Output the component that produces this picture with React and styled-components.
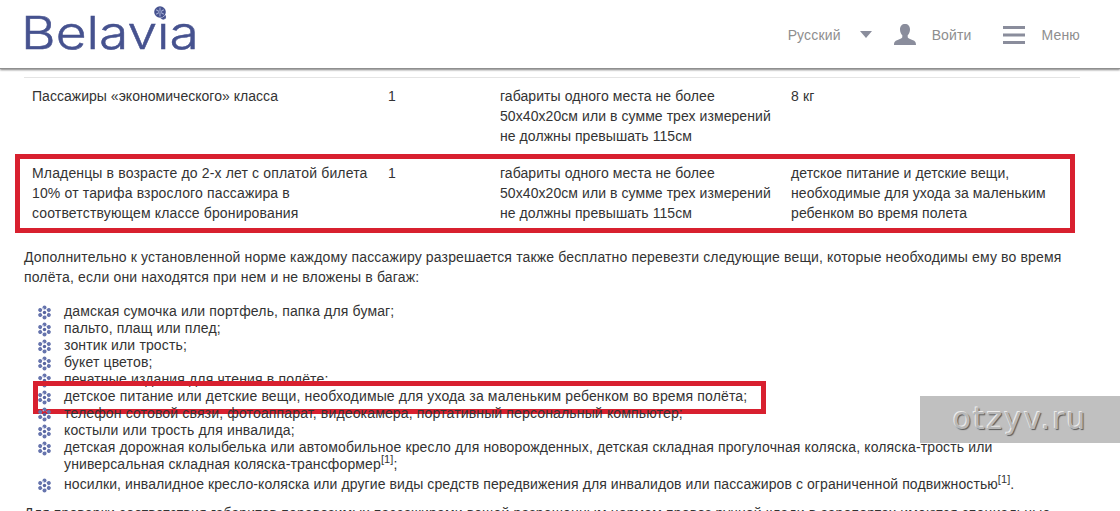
import React from 'react';
import styled, { createGlobalStyle } from 'styled-components';

const GlobalStyle = createGlobalStyle`
    html, body {
        margin: 0;
        padding: 0;
        height: 511px;
        overflow: hidden;
        background: #fff;
    }
    body {
        font-family: "Liberation Sans", Arial, sans-serif;
        font-size: 14px;
        letter-spacing: 0.15px;
        color: #333;
    }
`;

const Page = styled.div`
    position: relative;
    width: 1120px;
    height: 511px;
    overflow: hidden;
`;

const Header = styled.header`
    display: flex;
    align-items: center;
    justify-content: space-between;
    height: 69px;
    padding: 0 40px 0 24px;
    box-sizing: border-box;
    background: #fff;
    border-bottom: 1px solid #8f8f8f;
    box-shadow: 0 1px 2px #808080;
`;

const Logo = styled.div`
    position: relative;
    width: 171px;
    height: 45px;
    margin-top: -3px;
`;

const LogoText = styled.span`
    display: block;
    font-family: Inter, sans-serif;
    font-size: 45px;
    font-weight: 300;
    line-height: 45px;
    letter-spacing: 0;
    color: #46528f;
    -webkit-text-stroke: 0.5px #46528f;
    transform: translateX(-3px) scaleX(1.185);
    transform-origin: left center;
`;

const LogoDot = styled.span`
    position: absolute;
    top: -4px;
    left: 130px;
    display: flex;
    background: #fff;
    border-radius: 50%;
`;

const Nav = styled.nav`
    display: flex;
    align-items: center;
    margin-top: 1px;
`;

const NavLabel = styled.span`
    font-size: 14px;
    color: #8e8e8e;
    margin-left: ${ props => props.$gap || 0 }px;
`;

const NavIcon = styled.svg`
    display: block;
    fill: #8a8d9c;
    margin-left: ${ props => props.$gap }px;
`;

const Content = styled.main`
    padding: 8px 40px 0 24px;
`;

const Table = styled.div`
    border-top: 1px solid #e4e4e4;
`;

const Row = styled.div`
    position: relative;
    display: grid;
    grid-template-columns: 356px 112px 291px 1fr;
    padding: 8px 8px 9px;
    line-height: 20px;
`;

const Cell = styled.div`
    letter-spacing: ${ props => props.$spacing ?? 0.15 }px;
`;

const RowMark = styled.div`
    position: absolute;
    top: -1px;
    left: -9px;
    width: 1060px;
    height: 79px;
    box-sizing: border-box;
    border: 5px solid #d8202f;
`;

const Paragraph = styled.p`
    margin: ${ props => props.$top ?? 15 }px 0 0;
    line-height: 20px;
`;

const List = styled.ul`
    list-style: none;
    margin: 16px 0 0;
    padding: 0 0 0 13px;
`;

const Item = styled.li`
    position: relative;
    display: flex;
    line-height: 17px;
    gap: 12px;
    margin-top: ${ props => props.$pushed ? '3px' : 0 };
    letter-spacing: ${ props => props.$spacing ?? 0.15 }px;
`;

const Bullet = styled.svg`
    flex: none;
    width: 15px;
    height: 15px;
    margin-top: 2px;
`;

const ItemMark = styled.div`
    position: absolute;
    top: -7px;
    left: -4px;
    width: 733px;
    height: 33px;
    box-sizing: border-box;
    border: 5px solid #d8202f;
`;

const Note = styled.sup`
    font-size: 11px;
    line-height: 0;
    vertical-align: baseline;
    position: relative;
    top: -6px;
`;

const Watermark = styled.div`
    position: absolute;
    right: 0;
    top: 396px;
    display: flex;
    align-items: center;
    justify-content: center;
    width: 200px;
    height: 47px;
    padding-bottom: 3px;
    box-sizing: border-box;
    background: #c0c0c0;
    font-family: "DejaVu Sans", sans-serif;
    font-size: 30px;
    letter-spacing: 1.8px;
    color: #b8b8b8;
    text-shadow: -1px -1px 0 #ececec, 1px 1px 1px #5c5c5c;
`;

function Flake( { size = 15 } ) {
    const petals = [ 0, 60, 120, 180, 240, 300 ];
    return (
        <svg width={ size } height={ size } viewBox="0 0 30 30" style={ { display: 'block' } }>
            <circle cx="15" cy="15" r="14.500" fill="#46528f" />
            { petals.map( angle => (
                <line key={ angle } x1="15" y1="13" x2="15" y2="4" stroke="#aab3d8" strokeWidth="2.500" transform={ `rotate(${ angle } 15 15)` } />
            ) ) }
        </svg>
    );
}

function BulletFlake() {
    const petals = [ 0, 60, 120, 180, 240, 300 ];
    return (
        <Bullet viewBox="0 0 30 30">
            { petals.map( angle => (
                <g key={ angle } transform={ `rotate(${ angle } 15 15)` }>
                    <circle cx="15" cy="5" r="4" fill="#6674ad" />
                    <circle cx="20.5" cy="9" r="1.6" fill="#b4bcdc" />
                </g>
            ) ) }
            <circle cx="15" cy="15" r="3.4" fill="#56639f" />
        </Bullet>
    );
}

const ITEMS = [
    'дамская сумочка или портфель, папка для бумаг;',
    'пальто, плащ или плед;',
    'зонтик или трость;',
    'букет цветов;',
    'печатные издания для чтения в полёте;',
    'детское питание или детские вещи, необходимые для ухода за маленьким ребенком во время полёта;',
    'телефон сотовой связи, фотоаппарат, видеокамера, портативный персональный компьютер;',
    'костыли или трость для инвалида;',
];

/**
 * Baggage page of the airline site
 *
 * @returns {object} React component render
 */
export default function App() {
    return (
        <Page>
            <GlobalStyle />
            <Header>
                <Logo>
                    <LogoText>Belavia</LogoText>
                    <LogoDot><Flake size={ 12 } /></LogoDot>
                </Logo>
                <Nav>
                    <NavLabel>Русский</NavLabel>
                    <NavIcon $gap={ 19 } width="12" height="7" viewBox="0 0 12 7">
                        <path d="M0 0h12L6 7z" />
                    </NavIcon>
                    <NavIcon $gap={ 22 } width="22" height="21" viewBox="0 0 22 21">
                        <path d="M11 0c3 0 5 2 5 5.500 0 2.500-1 4.500-2.300 5.800v1.900c0 1 3 1.800 5.300 3 1.700.8 3 1.500 3 4.800H0c0-3.300 1.300-4 3-4.800 2.300-1.200 5.300-2 5.300-3v-1.900C7 10 6 8 6 5.500 6 2 8 0 11 0z" />
                    </NavIcon>
                    <NavLabel $gap={ 16 }>Войти</NavLabel>
                    <NavIcon $gap={ 31 } width="22" height="18" viewBox="0 0 22 18">
                        <path d="M0 0h22v3H0zM0 7.500h22v3H0zM0 15h22v3H0z" />
                    </NavIcon>
                    <NavLabel $gap={ 17 }>Меню</NavLabel>
                </Nav>
            </Header>
            <Content>
                <Table>
                    <Row>
                        <Cell $spacing={ 0.03 }>Пассажиры «экономического» класса</Cell>
                        <Cell>1</Cell>
                        <Cell $spacing={ 0.07 }>габариты одного места не более<br />50х40х20см или в сумме трех измерений<br />не должны превышать 115см</Cell>
                        <Cell>8 кг</Cell>
                    </Row>
                    <Row>
                        <Cell>Младенцы в возрасте до 2-х лет с оплатой билета<br />10% от тарифа взрослого пассажира в<br />соответствующем классе бронирования</Cell>
                        <Cell>1</Cell>
                        <Cell $spacing={ 0.07 }>габариты одного места не более<br />50х40х20см или в сумме трех измерений<br />не должны превышать 115см</Cell>
                        <Cell $spacing={ 0.09 }>детское питание и детские вещи,<br />необходимые для ухода за маленьким<br />ребенком во время полета</Cell>
                        <RowMark />
                    </Row>
                </Table>
                <Paragraph>
                    Дополнительно к установленной норме каждому пассажиру разрешается также бесплатно перевезти следующие вещи, которые необходимы ему во время полёта, если они находятся при нем и не вложены в багаж:
                </Paragraph>
                <List>
                    { ITEMS.map( ( text, index ) => (
                        <Item key={ text }>
                            <BulletFlake />
                            <span>{ text }</span>
                            { index === 5 && <ItemMark /> }
                        </Item>
                    ) ) }
                    <Item $spacing={ 0.13 }>
                        <BulletFlake />
                        <span>детская дорожная колыбелька или автомобильное кресло для новорожденных, детская складная прогулочная коляска, коляска-трость или универсальная складная коляска-трансформер<Note>[1]</Note>;</span>
                    </Item>
                    <Item $pushed $spacing={ 0.09 }>
                        <BulletFlake />
                        <span>носилки, инвалидное кресло-коляска или другие виды средств передвижения для инвалидов или пассажиров с ограниченной подвижностью<Note>[1]</Note>.</span>
                    </Item>
                </List>
                <Paragraph $top={ 10 }>
                    Для проверки соответствия габаритов перевозимых пассажирами вещей разрешенным нормам провоз ручной клади в аэропортах имеются специальные
                </Paragraph>
            </Content>
            <Watermark>otzyv.ru</Watermark>
        </Page>
    );
}
